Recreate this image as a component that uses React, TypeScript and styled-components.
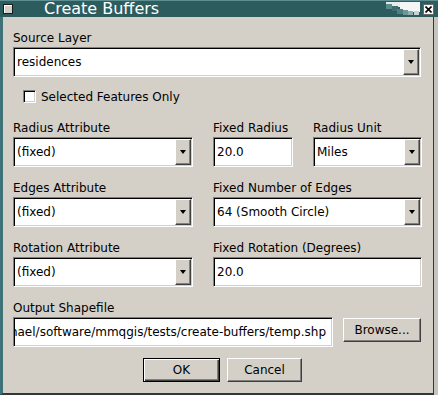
import React, {FunctionComponent} from 'react';
import styled, {createGlobalStyle} from "styled-components";

const GlobalStyle = createGlobalStyle`
  html, body {
    margin: 0;
    padding: 0;
    background: #d4d0c8;
  }

  body {
    font-family: "DejaVu Sans", "Noto Sans", sans-serif;
    font-size: 12px;
    color: #000;
  }
`

const Window = styled.div`
  width: 438px;
  height: 395px;
  display: flex;
  flex-direction: column;
  background: #c6c5bd;
  overflow: hidden;
`

const TitleBar = styled.div`
  height: 17px;
  flex: none;
  display: flex;
  align-items: center;
  box-sizing: border-box;
  background: #2d5c5e;
  border-top: 1px solid #5d8e91;
  padding-right: 4px;
`

const MenuBox = styled.div`
  width: 10px;
  height: 10px;
  margin-left: 3px;
  box-sizing: border-box;
  background: #d4d0c8;
  border: 1px solid #1c1c1c;
  box-shadow: inset 1px 1px 0 #ffffff;
`

const Title = styled.span`
  margin-left: 31px;
  font-size: 16px;
  line-height: 16px;
  color: #ffffff;
  white-space: nowrap;
  flex: 1;
`

const CloseBox = styled.div`
  width: 11px;
  height: 11px;
  margin-left: 3px;
  box-sizing: border-box;
  background: #ffffff;
  border: 1px solid #6a6a6a;
  display: flex;
  align-items: center;
  justify-content: center;
`

const Body = styled.div`
  flex: 1;
  box-sizing: border-box;
  background: #d4d0c8;
  border-left: 3px solid #3d7378;
  border-right: 1px solid #30393a;
  border-bottom: 2px solid #30393a;
  margin-right: 4px;
  padding: 14px 12px 0 10px;
  display: flex;
  flex-direction: column;
`

const Field = styled.div`
  display: flex;
  flex-direction: column;
`

const Label = styled.div`
  line-height: 14px;
  height: 14px;
  margin-bottom: 2px;
  white-space: nowrap;
`

const Sunken = styled.div<{ $width?: number }>`
  height: 30px;
  width: ${p => p.$width ? `${p.$width}px` : 'auto'};
  box-sizing: border-box;
  background: #ffffff;
  border: 1px solid;
  border-color: #808080 #ffffff #ffffff #808080;
  box-shadow: inset 1px 1px 0 #000000, inset -1px -1px 0 #d4d0c8;
  display: flex;
  align-items: stretch;
  overflow: hidden;
`

const Value = styled.div<{ $end?: boolean }>`
  flex: 1;
  min-width: 0;
  display: flex;
  align-items: center;
  justify-content: ${p => p.$end ? 'flex-end' : 'flex-start'};
  padding: 0 ${p => p.$end ? '6px' : '3px'} 0 3px;
  white-space: nowrap;
  overflow: hidden;
  line-height: 14px;
`

const DropButton = styled.div`
  width: 16px;
  margin: 1px 1px 1px 0;
  box-sizing: border-box;
  background: #d4d0c8;
  border: 1px solid;
  border-color: #ffffff #404040 #404040 #ffffff;
  box-shadow: inset -1px -1px 0 #808080;
  display: flex;
  align-items: center;
  justify-content: center;

  &::after {
    content: '';
    width: 0;
    height: 0;
    border-left: 3.5px solid transparent;
    border-right: 3.5px solid transparent;
    border-top: 4px solid #000000;
  }
`

const CheckRow = styled.label`
  display: flex;
  align-items: center;
  gap: 5px;
  margin-top: 13px;
  padding-left: 10px;
  height: 13px;
  line-height: 14px;
`

const CheckBox = styled.span`
  width: 13px;
  height: 13px;
  box-sizing: border-box;
  background: #ffffff;
  border: 1px solid;
  border-color: #808080 #ffffff #ffffff #808080;
  box-shadow: inset 1px 1px 0 #000000, inset -1px -1px 0 #d4d0c8;
`

const Grid = styled.div`
  display: grid;
  grid-template-columns: 180px 80px 109px;
  column-gap: 20px;
  row-gap: 14px;
  margin-top: 18px;
`

const Cell = styled(Field)<{ $span?: number }>`
  grid-column: span ${p => p.$span || 1};
`

const OutputRow = styled.div`
  display: flex;
  align-items: flex-start;
  gap: 10px;
`

const Button = styled.div<{ $width: number, $default?: boolean }>`
  width: ${p => p.$width}px;
  height: 24px;
  box-sizing: border-box;
  background: #d4d0c8;
  border: 1px solid;
  border-color: ${p => p.$default ? '#000000' : '#ffffff #404040 #404040 #ffffff'};
  box-shadow: ${p => p.$default
    ? 'inset 1px 1px 0 #ffffff, inset -1px -1px 0 #404040, inset -2px -2px 0 #808080'
    : 'inset -1px -1px 0 #808080'};
  display: flex;
  align-items: center;
  justify-content: center;
  line-height: 14px;
  white-space: nowrap;
`

const ButtonRow = styled.div`
  display: flex;
  gap: 7px;
  margin-top: 11px;
  padding-left: 130px;
`

const Combo: FunctionComponent<{ value: string, width?: number }> = ({value, width}) => (
  <Sunken $width={width}>
    <Value>{value}</Value>
    <DropButton/>
  </Sunken>
)

const TextBox: FunctionComponent<{ value: string, width?: number, end?: boolean }> = ({value, width, end}) => (
  <Sunken $width={width}>
    <Value $end={end}>{value}</Value>
  </Sunken>
)

const Decoration = () => (
  <svg width="34" height="14" viewBox="0 0 34 14">
    <rect x="0" y="0" width="34" height="5" fill="#e6ecec"/>
    <rect x="14" y="0" width="20" height="10" fill="#f4f6f6"/>
    <rect x="0" y="2" width="6" height="5" fill="#5b8a8c"/>
    <rect x="6" y="4" width="6" height="5" fill="#3f6d70"/>
    <rect x="11" y="7" width="6" height="5" fill="#4f7f82"/>
    <rect x="17" y="8" width="5" height="5" fill="#6c9799"/>
    <rect x="22" y="9" width="5" height="4" fill="#8fb0b1"/>
    <rect x="28" y="9" width="5" height="4" fill="#c3d4d4"/>
  </svg>
)

const fields = {
  path: '/home/michael/software/mmqgis/tests/create-buffers/temp.shp',
}

const App: FunctionComponent = () => {
  return (
    <>
      <GlobalStyle/>
      <Window>
        <TitleBar>
          <MenuBox/>
          <Title>Create Buffers</Title>
          <Decoration/>
          <CloseBox>
            <svg width="7" height="7" viewBox="0 0 7 7">
              <path d="M0.5 0.5 L6.5 6.5 M6.5 0.5 L0.5 6.5" stroke="#000" strokeWidth="1.6"/>
            </svg>
          </CloseBox>
        </TitleBar>
        <Body>
          <Field>
            <Label>Source Layer</Label>
            <Combo value="residences"/>
          </Field>
          <CheckRow>
            <CheckBox/>
            <span>Selected Features Only</span>
          </CheckRow>
          <Grid>
            <Cell>
              <Label>Radius Attribute</Label>
              <Combo value="(fixed)"/>
            </Cell>
            <Cell>
              <Label>Fixed Radius</Label>
              <TextBox value="20.0"/>
            </Cell>
            <Cell>
              <Label>Radius Unit</Label>
              <Combo value="Miles"/>
            </Cell>
            <Cell>
              <Label>Edges Attribute</Label>
              <Combo value="(fixed)"/>
            </Cell>
            <Cell $span={2}>
              <Label>Fixed Number of Edges</Label>
              <Combo value="64 (Smooth Circle)"/>
            </Cell>
            <Cell>
              <Label>Rotation Attribute</Label>
              <Combo value="(fixed)"/>
            </Cell>
            <Cell $span={2}>
              <Label>Fixed Rotation (Degrees)</Label>
              <TextBox value="20.0"/>
            </Cell>
          </Grid>
          <Field style={{marginTop: 14}}>
            <Label>Output Shapefile</Label>
            <OutputRow>
              <TextBox value={fields.path} width={320} end/>
              <Button $width={78} style={{marginTop: 1}}>Browse...</Button>
            </OutputRow>
          </Field>
          <ButtonRow>
            <Button $width={77} $default>OK</Button>
            <Button $width={75}>Cancel</Button>
          </ButtonRow>
        </Body>
      </Window>
    </>
  )
};

export default App;
